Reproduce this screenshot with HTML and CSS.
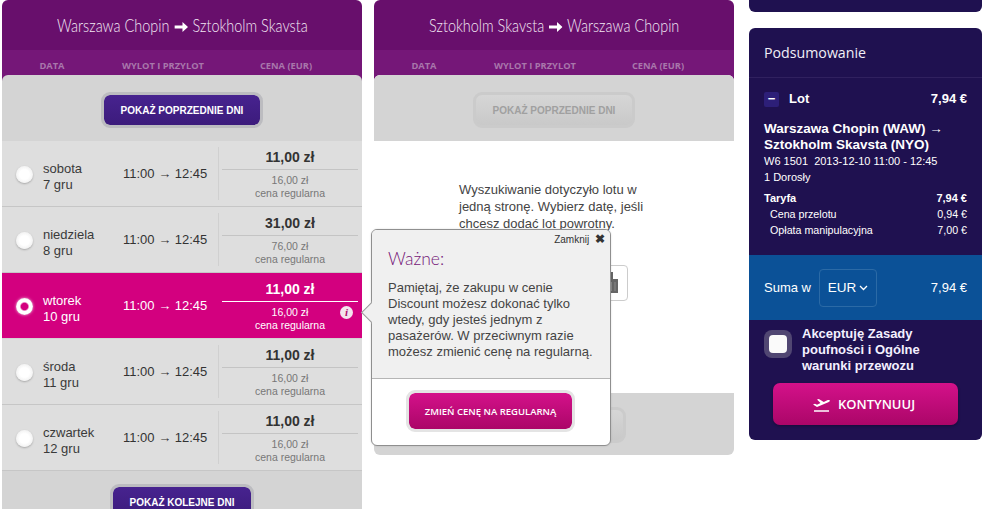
FILE: index.html
```html
<!DOCTYPE html>
<html lang="pl">
<head>
<meta charset="utf-8">
<title>Wybór lotu</title>
<link rel="stylesheet" href="styles.css">
</head>
<body>
<div class="page">
  <section class="col">
    <h2 class="route"><span class="route-in">Warszawa Chopin <svg class="route-arrow" width="16" height="10" viewBox="0 0 16 10"><path d="M0 3.500h9.500V0L16 5l-6.500 5V6.500H0z" fill="#fff"/></svg> Sztokholm Skavsta</span></h2>
    <div class="heads"><span class="h-date">DATA</span><span class="h-time">WYLOT I PRZYLOT</span><span class="h-price">CENA (EUR)</span></div>
    <div class="panel">
      <div class="nav"><button class="btn-purple btn-prev">POKAŻ POPRZEDNIE DNI</button></div>
      <div class="row"><span class="radio"></span><div class="date">sobota<br>7 gru</div><div class="time">11:00 → 12:45</div><div class="price"><div class="p-main">11,00 zł</div><div class="p-reg">16,00 zł<br>cena regularna</div></div></div>
      <div class="row"><span class="radio"></span><div class="date">niedziela<br>8 gru</div><div class="time">11:00 → 12:45</div><div class="price"><div class="p-main">31,00 zł</div><div class="p-reg">76,00 zł<br>cena regularna</div></div></div>
      <div class="row row-on"><span class="radio radio-on"></span><div class="date">wtorek<br>10 gru</div><div class="time">11:00 → 12:45</div><div class="price"><div class="p-main">11,00 zł</div><div class="p-reg">16,00 zł<br>cena regularna</div><span class="info">i</span></div></div>
      <div class="row"><span class="radio"></span><div class="date">środa<br>11 gru</div><div class="time">11:00 → 12:45</div><div class="price"><div class="p-main">11,00 zł</div><div class="p-reg">16,00 zł<br>cena regularna</div></div></div>
      <div class="row"><span class="radio"></span><div class="date">czwartek<br>12 gru</div><div class="time">11:00 → 12:45</div><div class="price"><div class="p-main">11,00 zł</div><div class="p-reg">16,00 zł<br>cena regularna</div></div></div>
      <div class="nav nav-next"><button class="btn-purple btn-next">POKAŻ KOLEJNE DNI</button></div>
    </div>
  </section>

  <section class="col">
    <h2 class="route"><span class="route-in">Sztokholm Skavsta <svg class="route-arrow" width="16" height="10" viewBox="0 0 16 10"><path d="M0 3.500h9.500V0L16 5l-6.500 5V6.500H0z" fill="#fff"/></svg> Warszawa Chopin</span></h2>
    <div class="heads"><span class="h-date">DATA</span><span class="h-time">WYLOT I PRZYLOT</span><span class="h-price">CENA (EUR)</span></div>
    <div class="panel panel-return">
      <div class="nav"><button class="btn-off">POKAŻ POPRZEDNIE DNI</button></div>
      <div class="return-body">
        <p class="return-text">Wyszukiwanie dotyczyło lotu w jedną stronę. Wybierz datę, jeśli chcesz dodać lot powrotny.</p>
        <div class="cal-box">
          <svg class="cal-icon" width="14" height="24" viewBox="0 0 14 24"><path d="M1 8h4V1h3v7h5v14H1z" fill="#666"/><path d="M3 11v9M6.500 11v9M10 11v9" stroke="#8a8a8a"/></svg>
        </div>
      </div>
      <div class="nav nav-bottom"><button class="btn-off btn-off-low"></button></div>
    </div>
  </section>

  <aside class="side">
    <div class="side-top"></div>
    <div class="summary">
      <h3 class="sum-title">Podsumowanie</h3>
      <div class="sum-body">
        <div class="line line-lot"><span class="lot-left"><span class="minus">−</span>Lot</span><span>7,94 €</span></div>
        <div class="sum-route">Warszawa Chopin (WAW) →<br>Sztokholm Skavsta (NYO)</div>
        <div class="sum-small">W6 1501&nbsp; 2013-12-10 11:00 - 12:45</div>
        <div class="sum-small">1 Dorosły</div>
        <div class="line line-fare"><span>Taryfa</span><span>7,94 €</span></div>
        <div class="line line-sub"><span>Cena przelotu</span><span>0,94 €</span></div>
        <div class="line line-sub"><span>Opłata manipulacyjna</span><span>7,00 €</span></div>
      </div>
      <div class="total">
        <span>Suma w</span>
        <span class="currency">EUR<svg width="9" height="6" viewBox="0 0 9 6"><path d="M1 1l3.500 3.500L8 1" fill="none" stroke="#fff" stroke-width="1.300"/></svg></span>
        <span class="total-val">7,94 €</span>
      </div>
      <div class="accept"><span class="check"><span class="check-in"></span></span><span class="accept-text">Akceptuję Zasady poufności i Ogólne warunki przewozu</span></div>
      <button class="continue">
        <svg width="17" height="17" viewBox="0 0 17 17"><path d="M0 8.500l2-.8 2 1 3.500-1.600L4 3.500l1.800-.5 5 3 3.500-1.700c1-.4 2.200-.3 2.500.2.200.6-.5 1.200-1.500 1.700L4 11z" fill="#fff"/><path d="M1 15h15" stroke="#fff" stroke-width="1.500"/></svg>
        KONTYNUUJ
      </button>
    </div>
  </aside>
</div>

<div class="pop">
  <span class="pop-arrow"></span>
  <div class="pop-main">
    <div class="pop-close">Zamknij <b class="x">✖</b></div>
    <h4 class="pop-title">Ważne:</h4>
    <p class="pop-text">Pamiętaj, że zakupu w cenie Discount możesz dokonać tylko wtedy, gdy jesteś jednym z pasażerów. W przeciwnym razie możesz zmienić cenę na regularną.</p>
  </div>
  <div class="pop-foot"><button class="btn-change">ZMIEŃ CENĘ NA REGULARNĄ</button></div>
</div>
</body>
</html>
```
FILE: styles.css
```css
* { box-sizing: border-box; }
html, body { margin: 0; height: 509px; overflow: hidden; background: #fff; }
body { font-family: "Liberation Sans", Arial, sans-serif; color: #333; position: relative; }
button { font-family: inherit; padding: 0; cursor: pointer; }

.page { display: flex; padding-left: 2px; height: 509px; overflow: hidden; }
.col { width: 360px; margin-right: 12px; flex: none; }
.col + .col { margin-right: 15px; }

.route { margin: 0; height: 50px; background: #680f6c; color: #f3e8f4; text-align: center; font: 300 17px/52px "Lato", sans-serif; border-radius: 6px 6px 0 0; white-space: nowrap; }
.route-in { display: inline-block; transform: scaleX(.85); }
.route-arrow { margin: 0 1px; }
.heads { height: 31px; margin-bottom: -6px; background: #751778; color: #a876ab; font: 700 9.300px/32px "Open Sans", sans-serif; display: flex; text-align: center; }
.h-date { width: 100px; }
.h-time { width: 122px; }
.h-price { width: 124px; }

.panel { background: #d4d4d4; border-radius: 6px 6px 0 0; position: relative; }
.nav { height: 66px; display: flex; justify-content: center; align-items: flex-start; padding-top: 17px; }
.btn-purple { height: 36px; border: 3px solid #bcbcc0; border-radius: 9px; color: #fff; font-weight: 700; font-size: 10px; background: linear-gradient(#47238f, #3c1b7c); background-clip: padding-box; }
.btn-prev { width: 162px; }
.btn-next { width: 144px; }
.nav-next { padding-top: 13px; }

.row { height: 66px; display: flex; align-items: center; background: #dedede; border-bottom: 1px solid #c6c6c6; padding-left: 14px; position: relative; }
.radio { width: 17px; height: 17px; border-radius: 50%; background: radial-gradient(#fff 40%, #eee 80%); box-shadow: 0 1px 2px rgba(0,0,0,.25); flex: none; margin-top: 2px; }
.date { width: 80px; margin-left: 10px; font-size: 13px; line-height: 16px; color: #3a3a3a; margin-top: 7px; }
.time { width: 95px; font-size: 13px; color: #333; white-space: nowrap; }
.price { width: 142px; align-self: stretch; margin: 6px 0; border-left: 1px solid #d0d0d0; padding: 0 2px 0 3px; position: relative; }
.p-main { height: 23px; border-bottom: 1px solid #c4c4c4; font-weight: 700; font-size: 14px; line-height: 20px; text-align: center; color: #333; }
.p-reg { text-align: center; font-size: 10.500px; line-height: 13px; color: #777; padding-top: 4px; }

.row-on { background: #d3007f; border-bottom: none; height: 65px; margin-bottom: 1px; }
.row-on .date, .row-on .time, .row-on .p-main, .row-on .p-reg { color: #fff; }
.row-on .price { border-left-color: transparent; }
.row-on .p-main { border-bottom-color: #fff; }
.radio-on { background: radial-gradient(circle closest-side, #d3007f 38%, #fff 56%, #fff 85%, #eee 100%); box-shadow: 0 0 3px rgba(255,255,255,.7); }
.info { position: absolute; right: 7px; top: 27px; width: 13px; height: 13px; border-radius: 50%; background: #f4e4ee; color: #b0106f; font: italic 700 11px/13px "Liberation Serif", serif; text-align: center; }

.panel-return { background: #fff; border-radius: 6px; }
.panel-return > .nav:first-child { background: #d4d4d4; border-radius: 6px 6px 0 0; }
.btn-off { width: 162px; height: 36px; border: 3px solid #cbcbcb; border-radius: 9px; background: linear-gradient(#d6d6d6, #c9c9c9); color: #a0a0a0; font-weight: 700; font-size: 10px; }
.return-body { height: 252px; position: relative; padding: 40px 85px; }
.return-text { margin: 0; font-size: 13px; line-height: 17px; color: #444; }
.cal-box { position: absolute; right: 106px; top: 124px; width: 40px; height: 36px; border: 1px solid #ccc; border-radius: 4px; background: #fff; display: flex; justify-content: flex-end; align-items: center; padding-right: 8px; }
.nav-bottom { background: #d4d4d4; height: 62px; border-radius: 0 0 6px 6px; padding-top: 14px; }
.btn-off-low { width: 144px; }

.side { width: 233px; flex: none; }
.side-top { height: 12px; background: #1f1150; border-radius: 0 0 6px 6px; }
.summary { margin-top: 16px; height: 412px; background: #1f1150; border-radius: 6px; color: #fff; }
.sum-title { margin: 0; height: 50px; border-bottom: 1px solid #30215f; padding-left: 15px; font: 400 14.200px/50px "Open Sans", sans-serif; color: #f1eff7; }
.sum-body { padding: 0 15px; height: 177px; }
.line { display: flex; justify-content: space-between; }
.line-lot { font-weight: 700; font-size: 13px; padding-top: 13px; line-height: 16px; }
.lot-left { display: flex; align-items: center; }
.minus { width: 15px; height: 15px; background: #2d1f78; border-radius: 2px; text-align: center; line-height: 14px; margin-right: 10px; }
.sum-route { font-weight: 700; font-size: 13.500px; line-height: 16px; margin-top: 14px; }
.sum-small { font-size: 11px; line-height: 16px; }
.line-fare { font-weight: 700; font-size: 11px; margin-top: 5px; line-height: 16px; }
.line-sub { font-size: 10.700px; line-height: 16px; padding-left: 6px; }
.total { height: 65px; background: #0b5197; display: flex; align-items: center; padding: 0 15px; font-size: 13px; }
.currency { margin-left: 8px; width: 58px; height: 38px; border: 1px solid #2b6aa6; border-radius: 4px; display: flex; align-items: center; justify-content: center; gap: 3px; font-size: 13.500px; }
.total-val { margin-left: auto; font-size: 13px; }
.accept { display: flex; padding: 6px 15px 0; align-items: flex-start; }
.check { width: 28px; height: 28px; border-radius: 8px; background: #504672; padding: 5px; margin-top: 4px; flex: none; }
.check-in { display: block; width: 18px; height: 18px; background: #fafafa; border-radius: 4px; }
.accept-text { margin-left: 10px; font-weight: 700; font-size: 13px; line-height: 16px; color: #f4f0ff; }
.continue { display: flex; align-items: center; justify-content: center; gap: 8px; width: 185px; height: 42px; margin: 9px 0 0 24px; padding-right: 3px; border: 0; border-radius: 7px; background: linear-gradient(#d4118a, #ab0668); color: #fff; font: 600 13px "Open Sans", sans-serif; box-shadow: 0 1px 3px rgba(0,0,0,.3); }

.pop { position: absolute; left: 371px; top: 229px; width: 240px; height: 217px; border: 1px solid #8f8f8f; border-radius: 6px; background: #fff; box-shadow: 0 0 2px rgba(0,0,0,.15); }
.pop-arrow { position: absolute; left: -12px; top: 70px; width: 12px; height: 24px; }
.pop-arrow::before { content: ""; position: absolute; left: 5px; top: 3px; width: 17px; height: 17px; background: #f0f0f0; border: 1px solid #999; transform: rotate(45deg); }
.pop-main { position: relative; height: 149px; background: #f0f0f0; border-bottom: 1px solid #b5b5b5; border-radius: 5px 5px 0 0; padding: 0 16px; }
.pop-close { position: absolute; right: 5px; top: 3px; font-size: 10px; color: #333; line-height: 12px; }
.x { font-size: 12px; margin-left: 3px; color: #333; }
.pop-title { margin: 0; padding-top: 17px; font: 300 17.500px/24px "Lato", sans-serif; color: #751778; }
.pop-text { margin: 9px 0 0; font-size: 13px; line-height: 16px; color: #444; }
.pop-foot { display: flex; justify-content: flex-start; padding: 11px 0 0 34px; }
.btn-change { width: 169px; height: 42px; border: 3px solid #e4e4e4; border-radius: 9px; background: linear-gradient(#d4118a, #ab0668); background-clip: padding-box; color: #fff; font: 600 9.500px "Open Sans", sans-serif; }
```
